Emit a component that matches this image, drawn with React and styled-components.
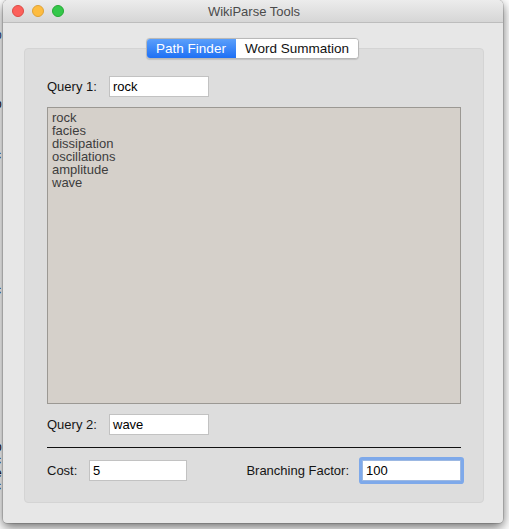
import React from "react";
import styled, { createGlobalStyle } from "styled-components";

const Global = createGlobalStyle`
  html, body { margin: 0; padding: 0; background: #ffffff; }
  body { font-family: "Liberation Sans", Arial, sans-serif; }
`;

const Desktop = styled.div`
  position: relative;
  width: 509px;
  height: 529px;
  overflow: hidden;
  background: #ffffff;
`;

const Backdrop = styled.div`
  display: flex;
  flex-direction: column;
  margin-left: -5px;
  font-size: 12px;
  line-height: 13px;
  color: #111;
`;

const BackLine = styled.span`
  display: block;
  height: 13px;
  margin-top: ${(p) => p.$gap}px;
  color: ${(p) => p.$color || "#111"};
`;

const Window = styled.div`
  position: absolute;
  left: 3px;
  top: 0;
  width: 500px;
  height: 523px;
  border-radius: 5px 5px 4px 4px;
  background: #e7e7e7;
  box-shadow: 0 0 0 0.5px rgba(0, 0, 0, 0.25), 0 4px 12px rgba(0, 0, 0, 0.6);
  display: flex;
  flex-direction: column;
  overflow: hidden;
`;

const TitleBar = styled.div`
  height: 22px;
  flex: none;
  position: relative;
  display: flex;
  align-items: center;
  justify-content: center;
  background: linear-gradient(#ececec, #d6d6d6);
  border-bottom: 1px solid #bdbdbd;
`;

const Lights = styled.div`
  position: absolute;
  left: 9px;
  top: 5px;
  display: flex;
  gap: 8px;
`;

const Light = styled.span`
  width: 12px;
  height: 12px;
  box-sizing: border-box;
  border-radius: 50%;
  background: ${(p) => p.$fill};
  border: 0.5px solid ${(p) => p.$edge};
`;

const Title = styled.div`
  font-size: 13px;
  color: #4b4b4b;
  margin-left: 2px;
`;

const Body = styled.div`
  flex: 1;
  display: flex;
  flex-direction: column;
  padding: 15px 19px 20px 21px;
`;

const SegRow = styled.div`
  display: flex;
  justify-content: center;
  margin-bottom: -11px;
  padding-right: 3px;
  position: relative;
  z-index: 1;
`;

const Segmented = styled.div`
  display: flex;
  height: 21px;
  box-sizing: border-box;
  border-radius: 4px;
  overflow: hidden;
  border: 1px solid #b8b8b8;
  background: #fff;
  box-shadow: 0 0.5px 1px rgba(0, 0, 0, 0.12);
`;

const Seg = styled.div`
  width: ${(p) => p.$w}px;
  display: flex;
  align-items: center;
  justify-content: center;
  font-size: 13.5px;
  color: ${(p) => (p.$active ? "#ffffff" : "#111")};
  background: ${(p) =>
    p.$active ? "linear-gradient(#5ea2fb, #1b6df4)" : "#ffffff"};
  margin: ${(p) => (p.$active ? "-1px 0 -1px -1px" : "0")};
`;

const GroupBox = styled.div`
  flex: 1;
  box-sizing: border-box;
  border: 1px solid #d4d4d4;
  border-radius: 4px;
  background: #dddddd;
  padding: 27px 22px 21px 22px;
  display: flex;
  flex-direction: column;
`;

const Row = styled.div`
  display: flex;
  align-items: center;
  height: 21px;
  justify-content: ${(p) => (p.$spread ? "space-between" : "flex-start")};
`;

const Pair = styled.div`
  display: flex;
  align-items: center;
`;

const Label = styled.span`
  width: ${(p) => (p.$w ? `${p.$w}px` : "auto")};
  margin-right: ${(p) => p.$mr || 0}px;
  font-size: 13px;
  color: #151515;
`;

const Field = styled.div`
  box-sizing: border-box;
  width: ${(p) => p.$w}px;
  height: ${(p) => p.$h || 21}px;
  background: #fff;
  border: 1px solid ${(p) => (p.$focus ? "#9cb8e2" : "#c2c2c2")};
  box-shadow: ${(p) => (p.$focus ? "0 0 0 3px #7ea9ea" : "none")};
  border-radius: ${(p) => (p.$focus ? "1px" : "0")};
  padding-left: 3px;
  display: flex;
  align-items: center;
  font-size: 13px;
  color: #000;
`;

const ListBox = styled.div`
  margin-top: 10px;
  height: 297px;
  box-sizing: border-box;
  border: 1px solid #9b9893;
  background: #d5d0ca;
  padding: 3px 4px;
  display: flex;
  flex-direction: column;
  font-size: 13px;
  line-height: 13px;
  color: #3d3d3d;
`;

const Spacer = styled.div`
  height: ${(p) => p.$h}px;
  flex: none;
`;

const Rule = styled.div`
  height: 1px;
  background: #111;
  margin: 12px 0 12px;
`;

const words = ["rock", "facies", "dissipation", "oscillations", "amplitude", "wave"];

const backLines = [
  { gap: 29, t: "p", c: "#1a3d7a" },
  { gap: 56, t: "p" },
  { gap: 38, t: "c" },
  { gap: 122, t: "c" },
  { gap: 144, t: "p" },
  { gap: 0, t: "c" },
  { gap: 0, t: "e" },
  { gap: 0, t: "c" },
];

export default function App() {
  return (
    <>
      <Global />
      <Desktop>
        <Backdrop>
          {backLines.map((l, i) => (
            <BackLine key={i} $gap={l.gap} $color={l.c}>
              {l.t}
            </BackLine>
          ))}
        </Backdrop>
        <Window>
          <TitleBar>
            <Lights>
              <Light $fill="#fc605b" $edge="#dc4b45" />
              <Light $fill="#fdbc40" $edge="#dea236" />
              <Light $fill="#34c84a" $edge="#27a935" />
            </Lights>
            <Title>WikiParse Tools</Title>
          </TitleBar>
          <Body>
            <SegRow>
              <Segmented>
                <Seg $active $w={90}>Path Finder</Seg>
                <Seg $w={122}>Word Summation</Seg>
              </Segmented>
            </SegRow>
            <GroupBox>
              <Row>
                <Label $w={62}>Query 1:</Label>
                <Field $w={100}>rock</Field>
              </Row>
              <ListBox>
                {words.map((w) => (
                  <span key={w}>{w}</span>
                ))}
              </ListBox>
              <Spacer $h={10} />
              <Row>
                <Label $w={62}>Query 2:</Label>
                <Field $w={100} $h={21}>wave</Field>
              </Row>
              <Rule />
              <Row $spread>
                <Pair>
                  <Label $w={42}>Cost:</Label>
                  <Field $w={98} $h={21}>5</Field>
                </Pair>
                <Pair>
                  <Label $mr={13}>Branching Factor:</Label>
                  <Field $w={99} $h={21} $focus>100</Field>
                </Pair>
              </Row>
            </GroupBox>
          </Body>
        </Window>
      </Desktop>
    </>
  );
}
